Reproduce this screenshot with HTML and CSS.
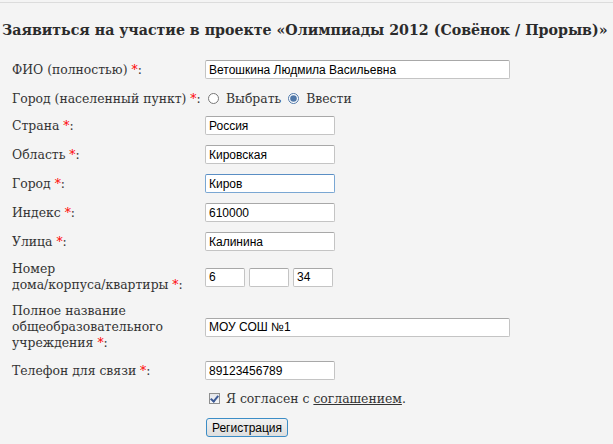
FILE: index.html
```html
<!DOCTYPE html>
<html lang="ru">
<head>
    <meta charset="UTF-8">
    <title>Регистрация</title>
    <link rel="stylesheet" href="styles.css">
</head>
<body>
    <div class="topline"></div>
    <h2 class="title">Заявиться на участие в проекте «Олимпиады 2012 (Совёнок / Прорыв)»</h2>

    <form class="regform">
        <table class="fields">
            <tr>
                <td class="lbl">ФИО (полностью) <span class="req">*</span>:</td>
                <td><input type="text" class="wide" value="Ветошкина Людмила Васильевна"></td>
            </tr>
            <tr class="radio-row">
                <td class="lbl">Город (населенный пункт) <span class="req">*</span>:</td>
                <td>
                    <label><input type="radio" name="citymode"> Выбрать</label>
                    <label><input type="radio" name="citymode" checked> Ввести</label>
                </td>
            </tr>
            <tr>
                <td class="lbl">Страна <span class="req">*</span>:</td>
                <td><input type="text" class="mid" value="Россия"></td>
            </tr>
            <tr>
                <td class="lbl">Область <span class="req">*</span>:</td>
                <td><input type="text" class="mid" value="Кировская"></td>
            </tr>
            <tr>
                <td class="lbl">Город <span class="req">*</span>:</td>
                <td><input type="text" class="mid focus" value="Киров"></td>
            </tr>
            <tr>
                <td class="lbl">Индекс <span class="req">*</span>:</td>
                <td><input type="text" class="mid" value="610000"></td>
            </tr>
            <tr>
                <td class="lbl">Улица <span class="req">*</span>:</td>
                <td><input type="text" class="mid" value="Калинина"></td>
            </tr>
            <tr>
                <td class="lbl">Номер<br>дома/корпуса/квартиры <span class="req">*</span>:</td>
                <td>
                    <div class="house">
                        <input type="text" class="small" value="6">
                        <input type="text" class="small" value="">
                        <input type="text" class="small" value="34">
                    </div>
                </td>
            </tr>
            <tr>
                <td class="lbl">Полное название<br>общеобразовательного<br>учреждения <span class="req">*</span>:</td>
                <td><input type="text" class="wide" value="МОУ СОШ №1"></td>
            </tr>
            <tr>
                <td class="lbl">Телефон для связи <span class="req">*</span>:</td>
                <td><input type="text" class="mid" value="89123456789"></td>
            </tr>
            <tr class="agree-row">
                <td></td>
                <td><label class="agree"><input type="checkbox" checked> Я согласен с <a href="#">соглашением</a>.</label></td>
            </tr>
            <tr>
                <td></td>
                <td><button type="submit">Регистрация</button></td>
            </tr>
        </table>
    </form>
</body>
</html>
```

FILE: styles.css
```css
html, body {
    margin: 0;
    overflow: hidden;
}
body {
    font-family: "DejaVu Serif", Georgia, serif;
    font-size: 12.4px;
    color: #333;
    background-color: #f4f4f4;
}
.topline {
    height: 2px;
    border-bottom: 1px solid #dcdcdc;
}
.title {
    margin: 19px 0 0 2px;
    font-size: 14.2px;
    font-weight: bold;
    white-space: nowrap;
    color: #2b2b2b;
}
.regform {
    padding: 17px 0 0 12px;
}
.fields {
    border-collapse: collapse;
}
.fields td {
    padding: 5px 0;
    line-height: 16px;
    vertical-align: middle;
}
.fields td.lbl {
    width: 193px;
}
.radio-row td {
    padding: 7px 0 4px;
}
.agree-row td {
    padding: 6px 0 4px;
}
.req {
    color: #f00;
}
input[type="text"] {
    box-sizing: border-box;
    height: 19px;
    margin: 0;
    padding: 1px 3px;
    border: 1px solid #c4c4c4;
    border-top-color: #a8a8a8;
    border-radius: 2px;
    background: #fff;
    font-family: "Liberation Sans", Arial, sans-serif;
    font-size: 12px;
    color: #000;
    vertical-align: middle;
}
input.wide {
    width: 305px;
}
input.mid {
    width: 130px;
}
.house {
    display: flex;
    gap: 4px;
}
input.small {
    width: 40px;
}
input.focus {
    border-color: #7aa7d3;
    border-top-color: #5a8ec4;
}
input[type="radio"] {
    width: 11px;
    height: 11px;
    margin: 0 3px 0 3px;
    vertical-align: -1px;
    accent-color: #4f77a8;
}
input[type="checkbox"] {
    appearance: none;
    position: relative;
    box-sizing: border-box;
    width: 11px;
    height: 11px;
    margin: 0 2px 0 4px;
    vertical-align: -1px;
    border: 1px solid #8e8f8f;
    background: linear-gradient(#e4e6ea, #f6f7f9);
}
input[type="checkbox"]:checked::after {
    content: "";
    position: absolute;
    left: 2px;
    top: 0;
    width: 3px;
    height: 6px;
    border: solid #3c5a96;
    border-width: 0 2px 2px 0;
    transform: rotate(40deg);
}
a {
    color: #333;
}
button {
    margin: 2px 0 0 1px;
    width: 82px;
    height: 19px;
    padding: 0;
    border: 1px solid #3c8dc6;
    border-radius: 3px;
    background: linear-gradient(#f2f2f2, #dedede);
    font-family: "Liberation Sans", Arial, sans-serif;
    font-size: 12px;
    color: #000;
    cursor: pointer;
}
```
